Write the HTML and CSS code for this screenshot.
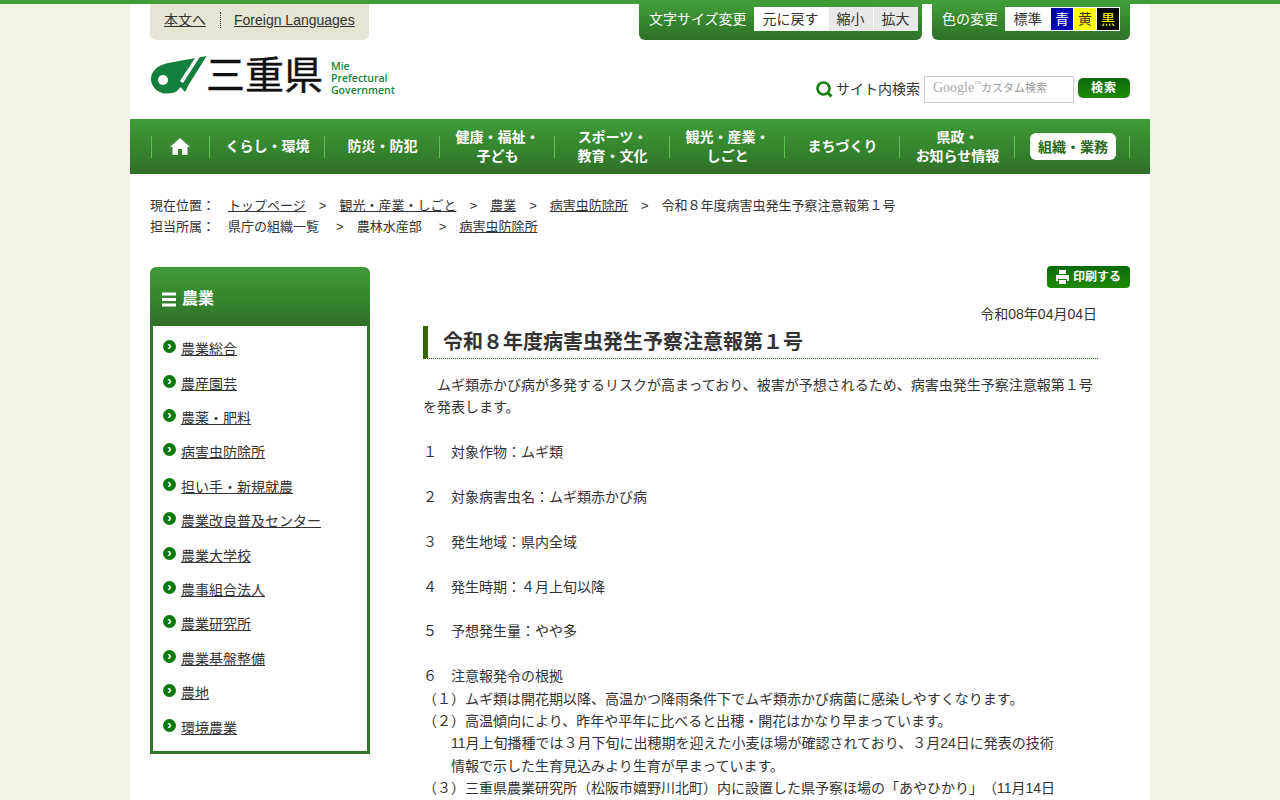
FILE: index.html
```html
<!DOCTYPE html>
<html lang="ja">
<head>
    <meta charset="UTF-8">
    <meta name="viewport" content="width=device-width, initial-scale=1.0">
    <title>令和８年度病害虫発生予察注意報第１号</title>
    <link rel="stylesheet" href="styles.css">
</head>
<body>
    <div class="wrapper">
        <header class="header">
            <div class="tool-row">
                <div class="skip-links">
                    <a href="#main">本文へ</a>
                    <a href="#lang" class="lang-link">Foreign Languages</a>
                </div>
                <div class="tool-boxes">
                    <div class="tool-box">
                        <span class="tool-label">文字サイズ変更</span>
                        <div class="tool-btns">
                            <span class="size-btn reset">元に戻す</span>
                            <span class="size-btn">縮小</span>
                            <span class="size-btn">拡大</span>
                        </div>
                    </div>
                    <div class="tool-box color-box">
                        <span class="tool-label">色の変更</span>
                        <div class="tool-btns">
                            <span class="color-btn std">標準</span>
                            <span class="color-btn blue">青</span>
                            <span class="color-btn yellow">黄</span>
                            <span class="color-btn black">黒</span>
                        </div>
                    </div>
                </div>
            </div>
            <div class="logo-row">
                <a href="#top" class="logo">
                    <svg class="logo-mark" width="57" height="40" viewBox="0 0 57 40">
                        <path fill="#15803d" d="M56.700 1 L18 8 C8 10 1 16 1 24 C1 32 8 38.500 16 38.500 C22 38.500 26 37.500 28 35 L30.500 32 L35 37 L38.500 30 Z"/>
                        <circle cx="13" cy="25" r="5" fill="#fff"/>
                        <path fill="#fff" d="M47 0 L51 0 L33 28 L30 26 Z"/>
                    </svg>
                    <span class="logo-kanji">三重県</span>
                    <span class="logo-en">Mie<br>Prefectural<br>Government</span>
                </a>
                <form class="search">
                    <svg class="search-icon" width="17" height="17" viewBox="0 0 17 17">
                        <circle cx="7.500" cy="7.500" r="6" fill="none" stroke="#1a7a12" stroke-width="2.600"/>
                        <path d="M11.500 11.500 L15.500 15.500" stroke="#1a7a12" stroke-width="3"/>
                    </svg>
                    <label class="search-label">サイト内検索</label>
                    <div class="search-input"><span class="google">Google<sup>™</sup></span>カスタム検索</div>
                    <span class="search-btn">検索</span>
                </form>
            </div>
        </header>

        <nav class="gnav">
            <ul>
                <li class="home">
                    <svg width="20" height="17" viewBox="0 0 20 17">
                        <path fill="#fff" d="M10 0 L20 9 L17.500 9 L17.500 17 L12 17 L12 11 L8 11 L8 17 L2.500 17 L2.500 9 L0 9 Z"/>
                    </svg>
                </li>
                <li><a href="#">くらし・環境</a></li>
                <li><a href="#">防災・防犯</a></li>
                <li><a href="#">健康・福祉・<br>子ども</a></li>
                <li><a href="#">スポーツ・<br>教育・文化</a></li>
                <li><a href="#">観光・産業・<br>しごと</a></li>
                <li><a href="#">まちづくり</a></li>
                <li><a href="#">県政・<br>お知らせ情報</a></li>
                <li class="current"><a href="#">組織・業務</a></li>
            </ul>
        </nav>

        <div class="breadcrumb">
            <div>
                <span class="crumb-label">現在位置：</span><a href="#">トップページ</a><span class="sep">&gt;</span><a href="#">観光・産業・しごと</a><span class="sep">&gt;</span><a href="#">農業</a><span class="sep">&gt;</span><a href="#">病害虫防除所</a><span class="sep">&gt;</span><span>令和８年度病害虫発生予察注意報第１号</span>
            </div>
            <div>
                <span class="crumb-label">担当所属：</span><span class="plain">県庁の組織一覧</span><span class="sep">&gt;</span><span class="plain">農林水産部</span><span class="sep">&gt;</span><a href="#">病害虫防除所</a>
            </div>
        </div>

        <div class="columns">
            <aside class="side">
                <h2 class="side-title"><span class="burger"></span>農業</h2>
                <ul class="side-list">
                    <li><a href="#">農業総合</a></li>
                    <li><a href="#">農産園芸</a></li>
                    <li><a href="#">農薬・肥料</a></li>
                    <li><a href="#">病害虫防除所</a></li>
                    <li><a href="#">担い手・新規就農</a></li>
                    <li><a href="#">農業改良普及センター</a></li>
                    <li><a href="#">農業大学校</a></li>
                    <li><a href="#">農事組合法人</a></li>
                    <li><a href="#">農業研究所</a></li>
                    <li><a href="#">農業基盤整備</a></li>
                    <li><a href="#">農地</a></li>
                    <li><a href="#">環境農業</a></li>
                </ul>
            </aside>

            <main class="main" id="main">
                <div class="print-row">
                    <span class="print-btn">
                        <svg width="13" height="14" viewBox="0 0 13 14">
                            <path fill="#fff" d="M3 0 H10 V4 H3 Z M0 5 H13 V11 H11 V9 H2 V11 H0 Z M3 10 H10 V14 H3 Z"/>
                        </svg>
                        印刷する
                    </span>
                </div>
                <div class="article">
                    <p class="date">令和08年04月04日</p>
                    <h1>令和８年度病害虫発生予察注意報第１号</h1>
                    <p class="body-text">
                        　ムギ類赤かび病が多発するリスクが高まっており、被害が予想されるため、病害虫発生予察注意報第１号を発表します。<br>
                        <br>
                        １　対象作物：ムギ類<br>
                        <br>
                        ２　対象病害虫名：ムギ類赤かび病<br>
                        <br>
                        ３　発生地域：県内全域<br>
                        <br>
                        ４　発生時期：４月上旬以降<br>
                        <br>
                        ５　予想発生量：やや多<br>
                        <br>
                        ６　注意報発令の根拠<br>
                        （１）ムギ類は開花期以降、高温かつ降雨条件下でムギ類赤かび病菌に感染しやすくなります。<br>
                        （２）高温傾向により、昨年や平年に比べると出穂・開花はかなり早まっています。<br>
                        　　11月上旬播種では３月下旬に出穂期を迎えた小麦ほ場が確認されており、３月24日に発表の技術<br>
                        　　情報で示した生育見込みより生育が早まっています。<br>
                        （３）三重県農業研究所（松阪市嬉野川北町）内に設置した県予察ほ場の「あやひかり」（11月14日
                    </p>
                </div>
            </main>
        </div>
    </div>
</body>
</html>
```

FILE: styles.css
```css
body {
    margin: 0;
    padding: 0;
    background: #f2f2e6;
    border-top: 4px solid #3f9c37;
    color: #333;
    font-family: "Liberation Sans", "Noto Sans CJK JP", sans-serif;
    font-size: 14px;
    line-height: 22.4px;
    text-spacing-trim: space-all;
}
a {
    color: #333;
}
ul {
    margin: 0;
    padding: 0;
    list-style: none;
}
.wrapper {
    width: 1020px;
    min-height: 796px;
    margin: 0 auto;
    background: #fff;
}
.header {
    padding: 0 20px;
    height: 115px;
}
.tool-row {
    display: flex;
    justify-content: space-between;
}
.skip-links {
    display: flex;
    align-items: center;
    width: 219px;
    height: 36px;
    box-sizing: border-box;
    padding: 0 0 4px 14px;
    background: #e6e4d2;
    border-radius: 0 0 6px 6px;
}
.lang-link {
    margin-left: 14px;
    padding-left: 13px;
    border-left: 1px dotted #333;
    line-height: 16px;
}
.tool-boxes {
    display: flex;
    gap: 10px;
}
.tool-box {
    display: flex;
    align-items: flex-start;
    width: 283px;
    height: 36px;
    box-sizing: border-box;
    padding: 3px 0 0 10px;
    background: linear-gradient(#3f9c37, #2f6f28);
    border-radius: 0 0 6px 6px;
}
.color-box {
    width: 198px;
}
.tool-label {
    color: #fff;
    line-height: 24px;
    margin-right: 7px;
}
.tool-btns {
    display: flex;
    gap: 1px;
    background: #fff;
    height: 24px;
    line-height: 25px;
}
.size-btn {
    width: 44px;
    text-align: center;
    background: #e8e8e8;
}
.size-btn.reset {
    width: 74px;
    background: #fff;
}
.color-btn {
    width: 22px;
    margin: 1px 0;
    line-height: 23px;
    text-align: center;
}
.color-btn.std {
    width: 45px;
}
.color-btn.blue {
    background: #0000b4;
    color: #fff;
}
.color-btn.yellow {
    background: #ff0;
}
.color-btn.black {
    background: #000;
    color: #ff0;
    margin-right: 1px;
}
.logo-row {
    display: flex;
    justify-content: space-between;
}
.logo {
    display: flex;
    margin-top: 15px;
    text-decoration: none;
}
.logo-kanji {
    width: 125px;
    margin-left: -1px;
    color: #111;
    font-size: 39px;
    line-height: 42px;
    -webkit-text-stroke: 0.4px #111;
    white-space: nowrap;
}
.logo-en {
    margin-top: 5px;
    color: #1a8040;
    font-family: "Open Sans", sans-serif;
    font-size: 10.5px;
    font-weight: 600;
    line-height: 12px;
}
.search {
    display: flex;
    align-items: center;
    margin: 36px 0 0;
    height: 27px;
}
.search-icon {
    margin-right: 3px;
}
.search-label {
    margin-right: 4px;
}
.search-input {
    width: 150px;
    height: 27px;
    box-sizing: border-box;
    padding-left: 8px;
    border: 1px solid #ccc;
    color: #999;
    font-size: 11px;
    line-height: 22px;
}
.google {
    font-family: "Liberation Serif", serif;
    font-size: 14px;
    color: #aaa;
}
.google sup {
    font-size: 7px;
    line-height: 0;
}
.search-btn {
    width: 52px;
    height: 20px;
    margin: -4px 0 0 4px;
    background: linear-gradient(#0a6a0a, #1f8a06);
    border-radius: 5px;
    color: #fff;
    font-size: 12px;
    font-weight: bold;
    line-height: 20px;
    letter-spacing: 1px;
    text-align: center;
}
.gnav {
    height: 55px;
    padding: 0 20px 0 21px;
    background: linear-gradient(#3f9c37, #2f6f28);
}
.gnav ul {
    display: flex;
    align-items: center;
    height: 100%;
}
.gnav li {
    position: relative;
    display: flex;
    align-items: center;
    justify-content: center;
    width: 115px;
    height: 100%;
    color: #fff;
    font-weight: bold;
    line-height: 19px;
    text-align: center;
}
.gnav li::after {
    content: "";
    position: absolute;
    right: 0;
    top: 17px;
    width: 1px;
    height: 22px;
    background: #5ac04e;
}
.gnav li.home {
    width: 59px;
    padding-right: 2px;
    box-sizing: border-box;
}
.gnav li.home::before {
    content: "";
    position: absolute;
    left: 0;
    top: 17px;
    width: 1px;
    height: 22px;
    background: #5ac04e;
}
.gnav a {
    color: #fff;
    text-decoration: none;
}
.gnav li.current a {
    display: block;
    width: 86px;
    height: 27px;
    margin-left: 1px;
    background: #fff;
    border-radius: 6px;
    color: #2a6a22;
    line-height: 29px;
}
.breadcrumb {
    height: 64px;
    box-sizing: border-box;
    padding: 22px 20px 0;
    font-size: 13px;
    line-height: 20.8px;
}
.crumb-label {
    display: inline-block;
    width: 78px;
}
.sep {
    display: inline-block;
    width: 33.7px;
    text-align: center;
}
.plain {
    margin-right: 4px;
}
.columns {
    display: flex;
    padding: 29px 20px 0;
}
.side {
    width: 220px;
    flex-shrink: 0;
}
.side-title {
    display: flex;
    align-items: center;
    height: 59px;
    box-sizing: border-box;
    margin: 0;
    padding: 6px 0 0 12px;
    background: linear-gradient(#3f9c37, #2f6f28);
    border-radius: 6px 6px 0 0;
    color: #fff;
    font-size: 16px;
}
.burger {
    width: 14px;
    height: 3.5px;
    margin-right: 6px;
    background: #fff;
    box-shadow: 0 5.5px 0 #fff, 0 -5.5px 0 #fff;
}
.side-list {
    padding: 6.3px 0 5.7px;
    border: 3px solid #35742e;
    border-top: 0;
}
.side-list li {
    position: relative;
    height: 34.4px;
    box-sizing: border-box;
    padding-left: 28px;
    line-height: 34.4px;
}
.side-list li::before {
    content: "›";
    position: absolute;
    left: 10px;
    top: 8px;
    width: 13px;
    height: 13px;
    background: #0a7a0a;
    border-radius: 50%;
    color: #fff;
    font-size: 13px;
    font-weight: bold;
    line-height: 11px;
    text-align: center;
}
.main {
    flex: 1;
    margin: -1px 0 0 53px;
}
.print-row {
    display: flex;
    justify-content: flex-end;
}
.print-btn {
    display: flex;
    align-items: center;
    justify-content: center;
    gap: 4px;
    width: 83px;
    height: 22px;
    background: linear-gradient(#0a6a0a, #1f8a06);
    border-radius: 4px;
    color: #fff;
    font-size: 12px;
    font-weight: bold;
}
.article {
    width: 675px;
}
.date {
    margin: 15px 0 0;
    padding-right: 1px;
    text-align: right;
}
h1 {
    margin: 1px 0 0;
    padding: 0 0 0 15px;
    height: 32px;
    border-left: 5px solid #336600;
    border-bottom: 1px dotted #336600;
    font-size: 20px;
    line-height: 32px;
}
.body-text {
    margin: 14.5px 0 0;
}
```
